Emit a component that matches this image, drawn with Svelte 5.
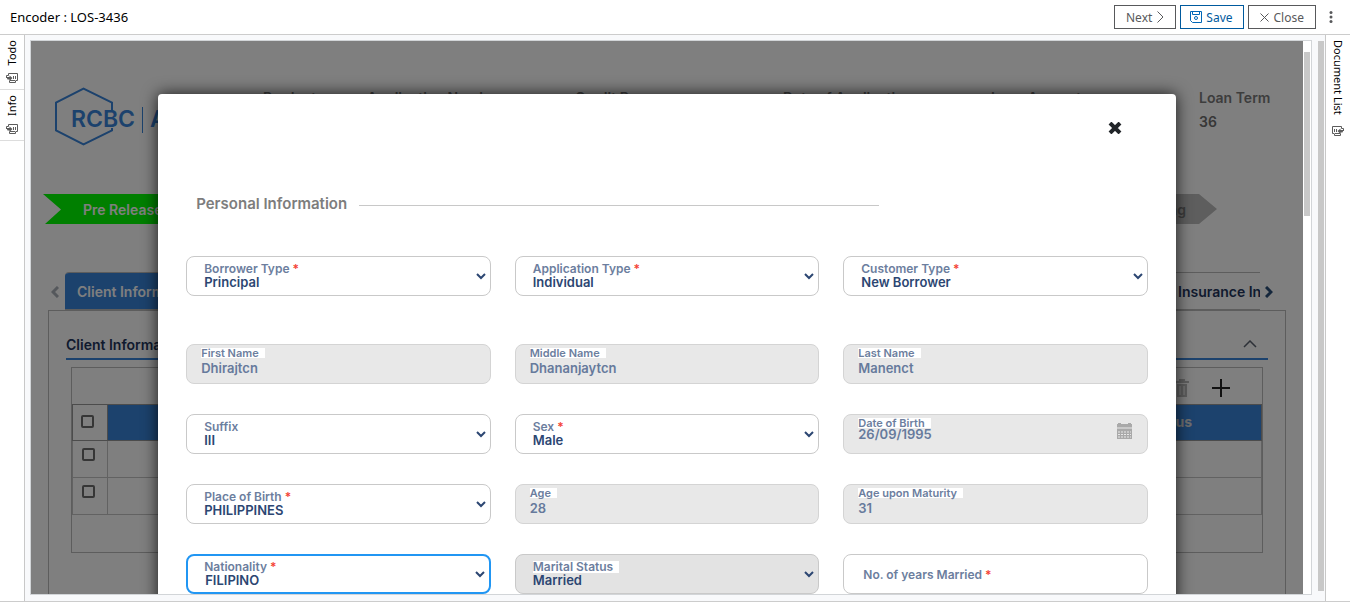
<script>
  const facts = [
    { name: 'Product' },
    { name: 'Application Number' },
    { name: 'Credit Program' },
    { name: 'Date of Application' },
    { name: 'Loan Amount' },
    { name: 'Loan Term', value: '36' },
  ];

  const rows = [
    [
      { id: 'borrower', kind: 'select', label: 'Borrower Type', value: 'Principal', required: true },
      { id: 'application', kind: 'select', label: 'Application Type', value: 'Individual', required: true },
      { id: 'customer', kind: 'select', label: 'Customer Type', value: 'New Borrower', required: true },
    ],
    [
      { id: 'first', kind: 'text', label: 'First Name', value: 'Dhirajtcn' },
      { id: 'middle', kind: 'text', label: 'Middle Name', value: 'Dhananjaytcn' },
      { id: 'last', kind: 'text', label: 'Last Name', value: 'Manenct' },
    ],
    [
      { id: 'suffix', kind: 'select', label: 'Suffix', value: 'III' },
      { id: 'sex', kind: 'select', label: 'Sex', value: 'Male', required: true },
      { id: 'dob', kind: 'date', label: 'Date of Birth', value: '26/09/1995' },
    ],
    [
      { id: 'pob', kind: 'select', label: 'Place of Birth', value: 'PHILIPPINES', required: true },
      { id: 'age', kind: 'text', label: 'Age', value: '28' },
      { id: 'maturity', kind: 'text', label: 'Age upon Maturity', value: '31' },
    ],
    [
      { id: 'nationality', kind: 'select', label: 'Nationality', value: 'FILIPINO', required: true, active: true },
      { id: 'marital', kind: 'select', label: 'Marital Status', value: 'Married', disabled: true },
      { id: 'years', kind: 'empty', label: 'No. of years Married', required: true },
    ],
  ];
</script>

{#snippet stackIcon(flip)}
  <svg class="stack" class:flip width="12" height="10" viewBox="0 0 12 10" fill="none" stroke="#5c5c5c" aria-hidden="true">
    <path d="M2.500 2.500v-2h9v7h-1.500M.5 5V2.500h2M3.500 8v1.500h6V8M3.500 7.500h6" />
    <path d="M7.500 3v3M9.500 3v3" />
    <path d="M.500 4h3V2.500L6.500 5 3.500 8V6.500H1.500z" fill="#5c5c5c" stroke="none" />
  </svg>
{/snippet}

<div class="shell">
  <header class="bar">
    <h1>Encoder : LOS-3436</h1>
    <div class="actions">
      <button class="btn">
        Next
        <svg width="7" height="12" viewBox="0 0 7 12" fill="none" stroke="#58595b"><path d="M.5.500l5.500 5.500-5.500 5.500" /></svg>
      </button>
      <button class="btn save">
        <svg width="12" height="12" viewBox="0 0 12 12" fill="none" stroke="#0067b8"><path d="M.5.500h11v11h-9l-2-2zM2.500.500v3h7v-3" /><circle cx="6" cy="7" r="1.500" /></svg>
        Save
      </button>
      <button class="btn">
        <svg width="9" height="9" viewBox="0 0 9 9" fill="none" stroke="#58595b"><path d="M.5.500l8 8M8.500.500l-8 8" /></svg>
        Close
      </button>
      <button class="more" aria-label="More">
        <svg width="4" height="12" viewBox="0 0 4 12" fill="#58595b"><circle cx="2" cy="1.500" r="1.500" /><circle cx="2" cy="6" r="1.500" /><circle cx="2" cy="10.500" r="1.500" /></svg>
      </button>
    </div>
  </header>

  <div class="body">
    <nav class="rail left">
      <button class="railtab"><span class="up">Todo</span>{@render stackIcon(false)}</button>
      <button class="railtab"><span class="up">Info</span>{@render stackIcon(false)}</button>
    </nav>

    <div class="workspace">
      <div class="frame">
        <div class="page">
          <section class="summary">
            <svg class="logo" width="140" height="60" viewBox="0 0 140 60" aria-label="RCBC">
              <path d="M57 24V15.500L28.500 1.500 1 15.500v28l27.500 14L57 43.500V41" fill="none" stroke="#3984da" stroke-width="2" />
              <text x="16" y="40">RCBC</text>
              <path d="M87.500 20v26" stroke="#3984da" />
              <text x="95" y="40">A</text>
            </svg>
            {#each facts as fact}
              <dl>
                <dt>{fact.name}</dt>
                {#if fact.value}<dd>{fact.value}</dd>{/if}
              </dl>
            {/each}
          </section>

          <ol class="steps">
            <li class="step done">Pre Release</li>
            <li class="step">Booking</li>
          </ol>

          <div class="tabs">
            <button class="arrow" aria-label="Previous tabs">
              <svg width="8" height="12" viewBox="0 0 8 12" fill="none" stroke="#aab0b8" stroke-width="3"><path d="M7 1L2 6l5 5" /></svg>
            </button>
            <div class="strip">
              <button class="tab on">Client Information</button>
              <div class="tail"><button class="tab">Insurance Information</button></div>
            </div>
            <button class="arrow" aria-label="Next tabs">
              <svg width="8" height="12" viewBox="0 0 8 12" fill="none" stroke="#2b4f78" stroke-width="3"><path d="M1 1l5 5-5 5" /></svg>
            </button>
          </div>

          <section class="panel">
            <h2>
              Client Information
              <svg width="14" height="8" viewBox="0 0 14 8" fill="none" stroke="#5a6270" stroke-width="1.500"><path d="M1 7l6-6 6 6" /></svg>
            </h2>
            <div class="gridbox">
              <div class="tools">
                <button aria-label="Delete">
                  <svg width="14" height="18" viewBox="0 0 14 18" fill="#bcbcbc"><path d="M0 2h4V0h6v2h4v2H0zM2 5h10v13H2z" /><path d="M5 7v9M9 7v9" stroke="#fff" /></svg>
                </button>
                <button aria-label="Add">
                  <svg width="18" height="18" viewBox="0 0 18 18" stroke="#222" stroke-width="2"><path d="M9 0v18M0 9h18" /></svg>
                </button>
              </div>
              <table>
                <thead>
                  <tr>
                    <th class="pick"><input type="checkbox" aria-label="Select all" /></th>
                    <th>Status</th>
                  </tr>
                </thead>
                <tbody>
                  <tr><td class="pick"><input type="checkbox" aria-label="Select row 1" /></td><td></td></tr>
                  <tr><td class="pick"><input type="checkbox" aria-label="Select row 2" /></td><td></td></tr>
                </tbody>
              </table>
            </div>
          </section>

          <div class="overlay">
            <div class="dialog" role="dialog" aria-labelledby="dialog-title">
              <div class="dismiss">
                <button aria-label="Close dialog">
                  <svg width="14" height="12" viewBox="0 0 14 12" fill="none" stroke="#212529" stroke-width="4"><path d="M2 1l10 10M12 1L2 11" /></svg>
                </button>
              </div>
              <h3 id="dialog-title">Personal Information</h3>
              <form>
                {#each rows as row}
                  <div class="row">
                    {#each row as f}
                      <div class="field {f.kind}" class:off={f.disabled} class:active={f.active}>
                        <label for={f.id}>{f.label}{#if f.required}{' '}<i>*</i>{/if}</label>
                        {#if f.kind === 'select'}
                          <select id={f.id} disabled={f.disabled}><option>{f.value}</option></select>
                          <svg class="caret" width="10" height="7" viewBox="0 0 10 7" fill="none" stroke="#2c4672" stroke-width="2"><path d="M1 1l4 4 4-4" /></svg>
                        {:else if f.kind === 'empty'}
                          <input id={f.id} type="text" />
                        {:else}
                          <input id={f.id} type="text" value={f.value} disabled />
                          {#if f.kind === 'date'}
                            <svg class="cal" width="15" height="16" viewBox="0 0 15 16"><path d="M0 1h1V0h3v1h7V0h3v1h1v3.500H0zM0 5.500h15V16H0z" fill="#a9a9a9" /><path d="M1 9h13M1 11.500h13M1 14h13" stroke="#e8e8e8" stroke-dasharray="2 1" /></svg>
                          {/if}
                        {/if}
                      </div>
                    {/each}
                  </div>
                {/each}
              </form>
            </div>
          </div>
        </div>
        <div class="track"><div class="thumb"></div></div>
      </div>
      <div class="outer"></div>
    </div>

    <nav class="rail right">
      <button class="railtab"><span>Document List</span>{@render stackIcon(true)}</button>
    </nav>
  </div>
</div>

<style>
  :global(body) { background: #fff; }
  .shell {
    display: flex;
    flex-direction: column;
    height: 100vh;
    overflow: hidden;
    font-family: "Noto Sans", "Open Sans", sans-serif;
    font-size: 13px;
    color: #000;
  }
  .shell * { box-sizing: border-box; }
  button { border: 0; background: none; padding: 0; font: inherit; color: inherit; }
  svg { display: block; flex: none; }

  .bar {
    display: flex;
    align-items: center;
    justify-content: space-between;
    height: 35px;
    flex: none;
    padding: 0 17px 0 10px;
    border-bottom: 1px solid #ccc;
  }
  h1 { margin: 0; font-size: 13px; font-weight: 400; }
  .actions { display: flex; gap: 4px; }
  .btn {
    display: flex;
    align-items: center;
    gap: 5px;
    height: 24px;
    padding: 0 11px;
    border: 1px solid #58595b;
    color: #58595b;
    font-size: 12px;
  }
  .save { border-color: #005a9e; color: #005a9e; padding: 0 10px 0 9px; gap: 4px; }
  .more { display: flex; align-items: center; width: 13px; justify-content: flex-end; }

  .body { display: flex; flex: 1; min-height: 0; border-bottom: 1px solid #ccc; }
  .rail { width: 25px; flex: none; }
  .left { border-right: 1px solid #c8c8c8; }
  .right { border-left: 1px solid #c8c8c8; }
  .railtab {
    display: flex;
    flex-direction: column;
    align-items: center;
    gap: 8px;
    width: 100%;
    padding: 5px 0 6px;
    font-size: 11px;
    line-height: 16px;
  }
  .left .railtab { border-bottom: 1px solid #ddd; }
  .railtab span { writing-mode: vertical-rl; }
  .right .railtab { gap: 11px; }
  .up { transform: rotate(180deg); }
  .flip { transform: scaleX(-1); }

  .workspace { display: flex; flex: 1; min-width: 0; background: #f8f9fb; padding: 5px 1px 6px 5px; gap: 6px; }
  .frame { display: flex; flex: 1; min-width: 0; border: 1px solid #d2d5d8; background: #fff; }
  .outer { width: 6px; background: #c8c8c8; margin: 1px 0 4px; }
  .track { width: 8px; flex: none; padding: 11px 1px 0; }
  .thumb { height: 164px; background: #c8c8c8; }

  .page {
    position: relative;
    flex: 1;
    min-width: 0;
    overflow: hidden;
    font-family: Inter, "Open Sans", sans-serif;
    font-size: 14px;
    font-weight: 600;
    color: #22355c;
  }
  .summary {
    display: grid;
    grid-template-columns: 232px 1fr 2fr 2fr 2fr 2fr 1fr;
    padding-top: 45px;
    height: 153px;
    color: #6f6f6f;
    white-space: nowrap;
  }
  .logo { margin: 1px 0 0 24px; }
  .logo text { font: 600 23px Inter, sans-serif; fill: #3984da; }
  dl { margin: 0; line-height: 24px; }
  dt { color: #7a7a7a; }
  dd { margin: 0; }

  .steps {
    display: flex;
    justify-content: space-between;
    margin: 0 86px 0 12px;
    padding: 0;
    list-style: none;
    line-height: 31px;
  }
  .step {
    width: 180px;
    height: 30px;
    padding: 0 31px 0 40px;
    text-align: right;
    background: #bdbdbd;
    color: #777;
    clip-path: polygon(0 0, calc(100% - 18px) 0, 100% 50%, calc(100% - 18px) 100%, 2px 100%, 18px 52%);
  }
  .done { text-align: left; background: #0f0; color: #fff; }

  .tabs { display: flex; margin: 48px 26px 0 17px; height: 38px; }
  .arrow { width: 17px; display: flex; align-items: center; padding: 2px 0 0 3px; }
  .arrow:last-child { padding-left: 5px; }
  .strip {
    display: flex;
    flex: 1;
    min-width: 0;
    justify-content: space-between;
    overflow: hidden;
    border: solid #bbb;
    border-width: 1px 0;
    border-top-left-radius: 4px;
  }
  .tab { padding: 0 12px; white-space: nowrap; }
  .tab.on { background: #3984da; color: #fff; }
  .tail { width: 94px; overflow: hidden; display: flex; }

  .panel { margin: 0 17px; border: 1px solid #bbb; height: 320px; padding: 19px 17px 0; }
  h2 {
    display: flex;
    align-items: center;
    justify-content: space-between;
    margin: 0;
    height: 30px;
    padding-right: 11px;
    border-bottom: 2px solid #3984da;
    font-size: 14px;
    font-weight: 600;
  }
  .gridbox { margin: 7px 5px 0; border: 1px solid #bbb; height: 186px; }
  .tools { display: flex; justify-content: flex-end; align-items: center; gap: 23px; height: 36px; padding: 4px 32px 0 0; }
  table { width: 100%; border-collapse: collapse; font-size: 14px; }
  th { height: 36px; border: 1px solid #999; background: #3984da; color: #ddd; text-align: right; padding: 0 69px 2px 0; }
  td { height: 37px; border: 1px solid #c4c4c4; padding: 0; }
  th.pick, td.pick { width: 35px; padding: 0 0 2px 8px; background: none; text-align: left; }
  td.pick { vertical-align: top; padding: 7px 0 0 9px; }
  .pick input {
    display: block;
    appearance: none;
    width: 13px;
    height: 13px;
    margin: 0;
    border: 2px solid #6c6c6c;
    border-radius: 2px;
  }

  .overlay { position: absolute; inset: 0; background: rgba(0, 0, 0, .5); padding: 53px 10% 0; }
  .dialog {
    min-height: 100%;
    padding: 27px 28px 30px;
    border-radius: 4px;
    background: #fff;
    box-shadow: 0 0 16px rgba(0, 0, 0, .8);
  }
  .dismiss { display: flex; justify-content: flex-end; padding-right: 26px; height: 73px; align-items: flex-start; }
  .dismiss button { padding-top: 1px; }
  h3 {
    display: flex;
    align-items: center;
    gap: 12px;
    margin: 0 0 42px;
    padding-left: 10px;
    font-size: 15px;
    line-height: 20px;
    font-weight: 600;
    color: #7d7d7d;
  }
  h3::after { content: ""; width: 520px; height: 1px; background: #c8c8c8; margin-top: 3px; }
  form { display: flex; flex-direction: column; gap: 30px; }
  .row { display: grid; grid-template-columns: repeat(3, 1fr); gap: 24px; }
  .row:first-child { margin-bottom: 18px; }
  .field { position: relative; height: 40px; }
  .field input, .field select {
    appearance: none;
    display: block;
    width: 100%;
    height: 40px;
    margin: 0;
    border: 1px solid #c9c9c9;
    border-radius: 8px;
    background: #fff;
    font: 600 13px Inter, sans-serif;
    color: #2c4672;
    opacity: 1;
    outline: 0;
  }
  .field select { padding: 11px 17px 0; }
  .field input { padding: 8px 14px 0; }
  .field.date input { padding-top: 0; }
  .field input:disabled { background: #e8e8e8; color: #667a9c; border-color: #d4d4d4; }
  .off select { background: #e3e3e3; }
  .active select { border: 2px solid #2196f3; }
  label { position: absolute; left: 18px; top: 7px; font-size: 12px; line-height: 12px; color: #6c7e9e; white-space: nowrap; z-index: 1; }
  .text label, .date label { left: 15px; top: 4px; line-height: 10px; font-size: 11px; background: #fff; padding-right: 6px; }
  .off label { background: #fff; padding-right: 6px; }
  .empty label { left: 20px; top: 15px; }
  i { color: #f44336; font-style: normal; }
  .caret { position: absolute; right: 5px; top: 17px; }
  .active .caret { right: 6px; }
  .cal { position: absolute; right: 16px; top: 9px; }
</style>
